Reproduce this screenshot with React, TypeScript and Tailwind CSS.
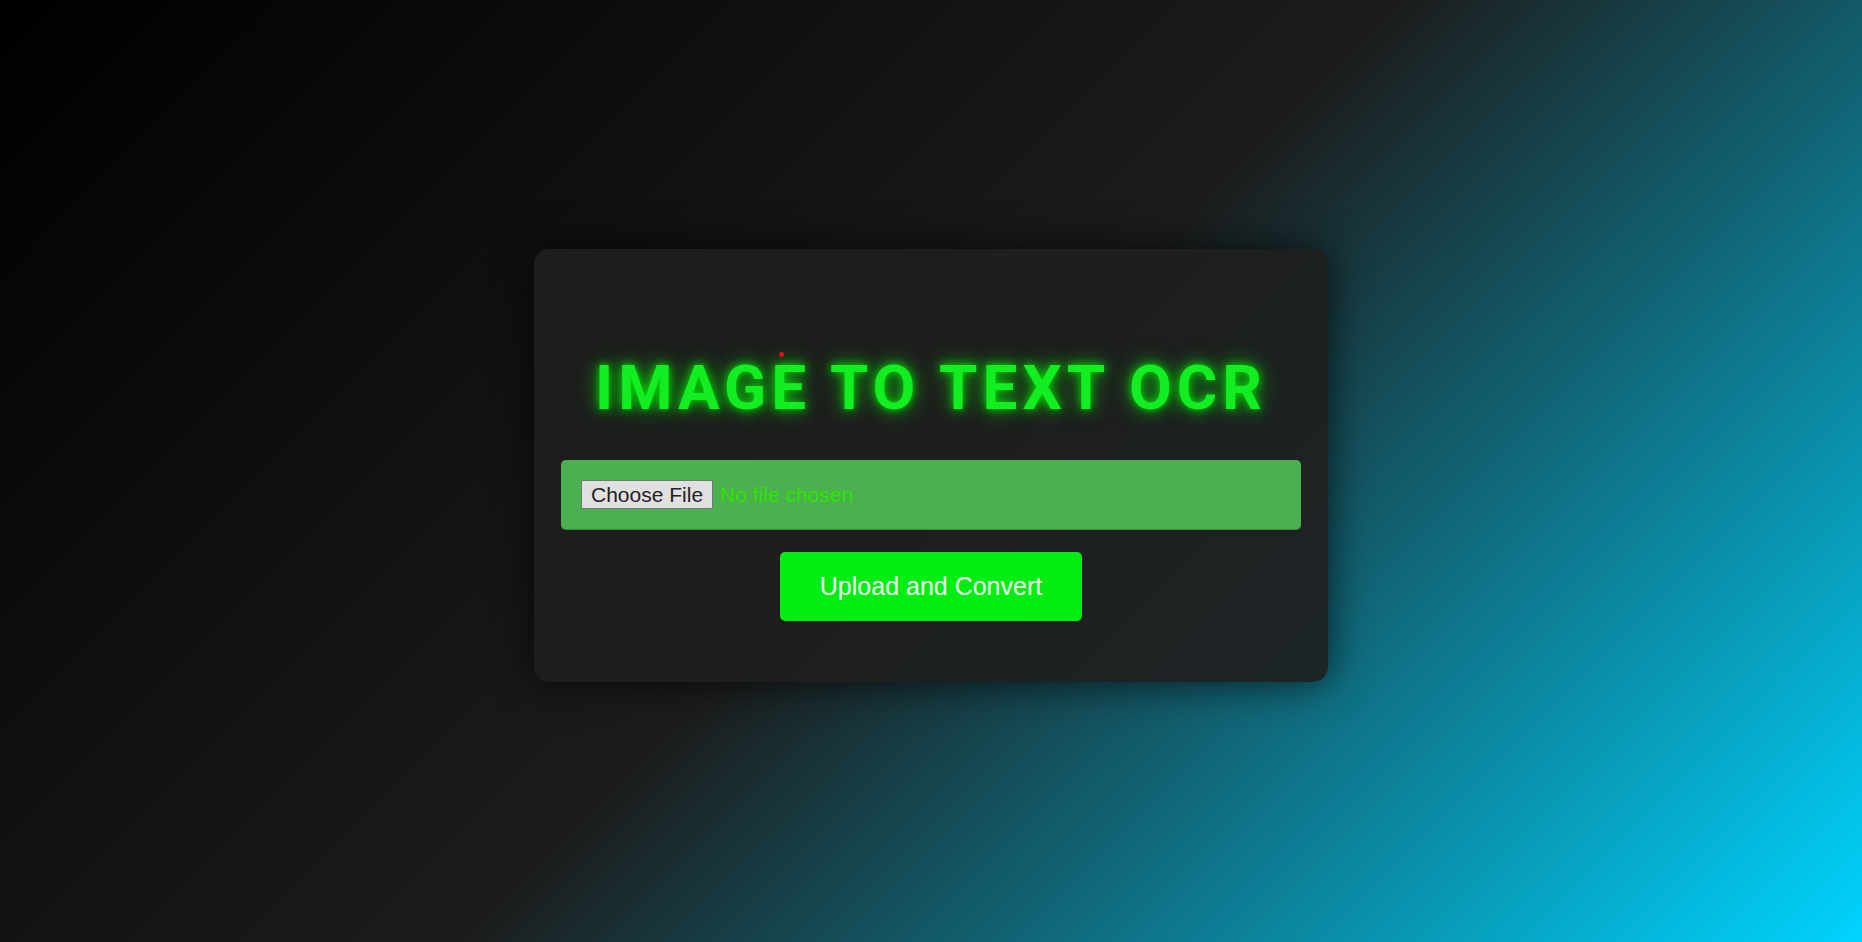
export default function App() {
  return (
    <div className="flex min-h-screen w-full items-center justify-center bg-[linear-gradient(135deg,#000000,#1c1c1c_50%,#00d4ff)] pb-[11px] font-['Liberation_Sans',Arial,sans-serif]">
      {/* CARD */}
      <div className="relative flex w-[794px] flex-col items-center rounded-[15px] bg-[rgba(30,30,30,0.92)] px-[27px] pt-[102px] pb-[61px] shadow-[0_0_40px_rgba(0,0,0,0.7)]">
        <span className="absolute left-[245px] top-[103px] h-[5px] w-[5px] rounded-full bg-[#e01010]" />
        <h1 className="font-['Roboto',sans-serif] text-[62px] font-bold uppercase leading-[74px] tracking-[5px] text-[#13ee22] [text-shadow:0_0_8px_rgba(0,255,0,0.8),0_0_18px_rgba(0,255,0,0.5),0_0_30px_rgba(0,255,0,0.25)]">
          Image to Text OCR
        </h1>

        {/* FILE INPUT */}
        <input
          type="file"
          className="mt-[35px] w-full rounded-[5px] border-b border-[#3d8a40] bg-[#4caf50] px-5 py-5 text-[21px] leading-[25px] text-[#2ee600] file:mr-[7px] file:rounded-[2px] file:border file:border-solid file:border-[#767676] file:bg-[#e0e0e0] file:px-[9px] file:py-[1px] file:text-[#222]"
        />

        {/* BUTTON */}
        <button className="mt-[22px] h-[69px] rounded-[5px] bg-[#02ee12] px-10 text-[25px] text-[#f2fff2] shadow-[0_2px_3px_rgba(0,0,0,0.3)]">
          Upload and Convert
        </button>
      </div>
    </div>
  );
}
